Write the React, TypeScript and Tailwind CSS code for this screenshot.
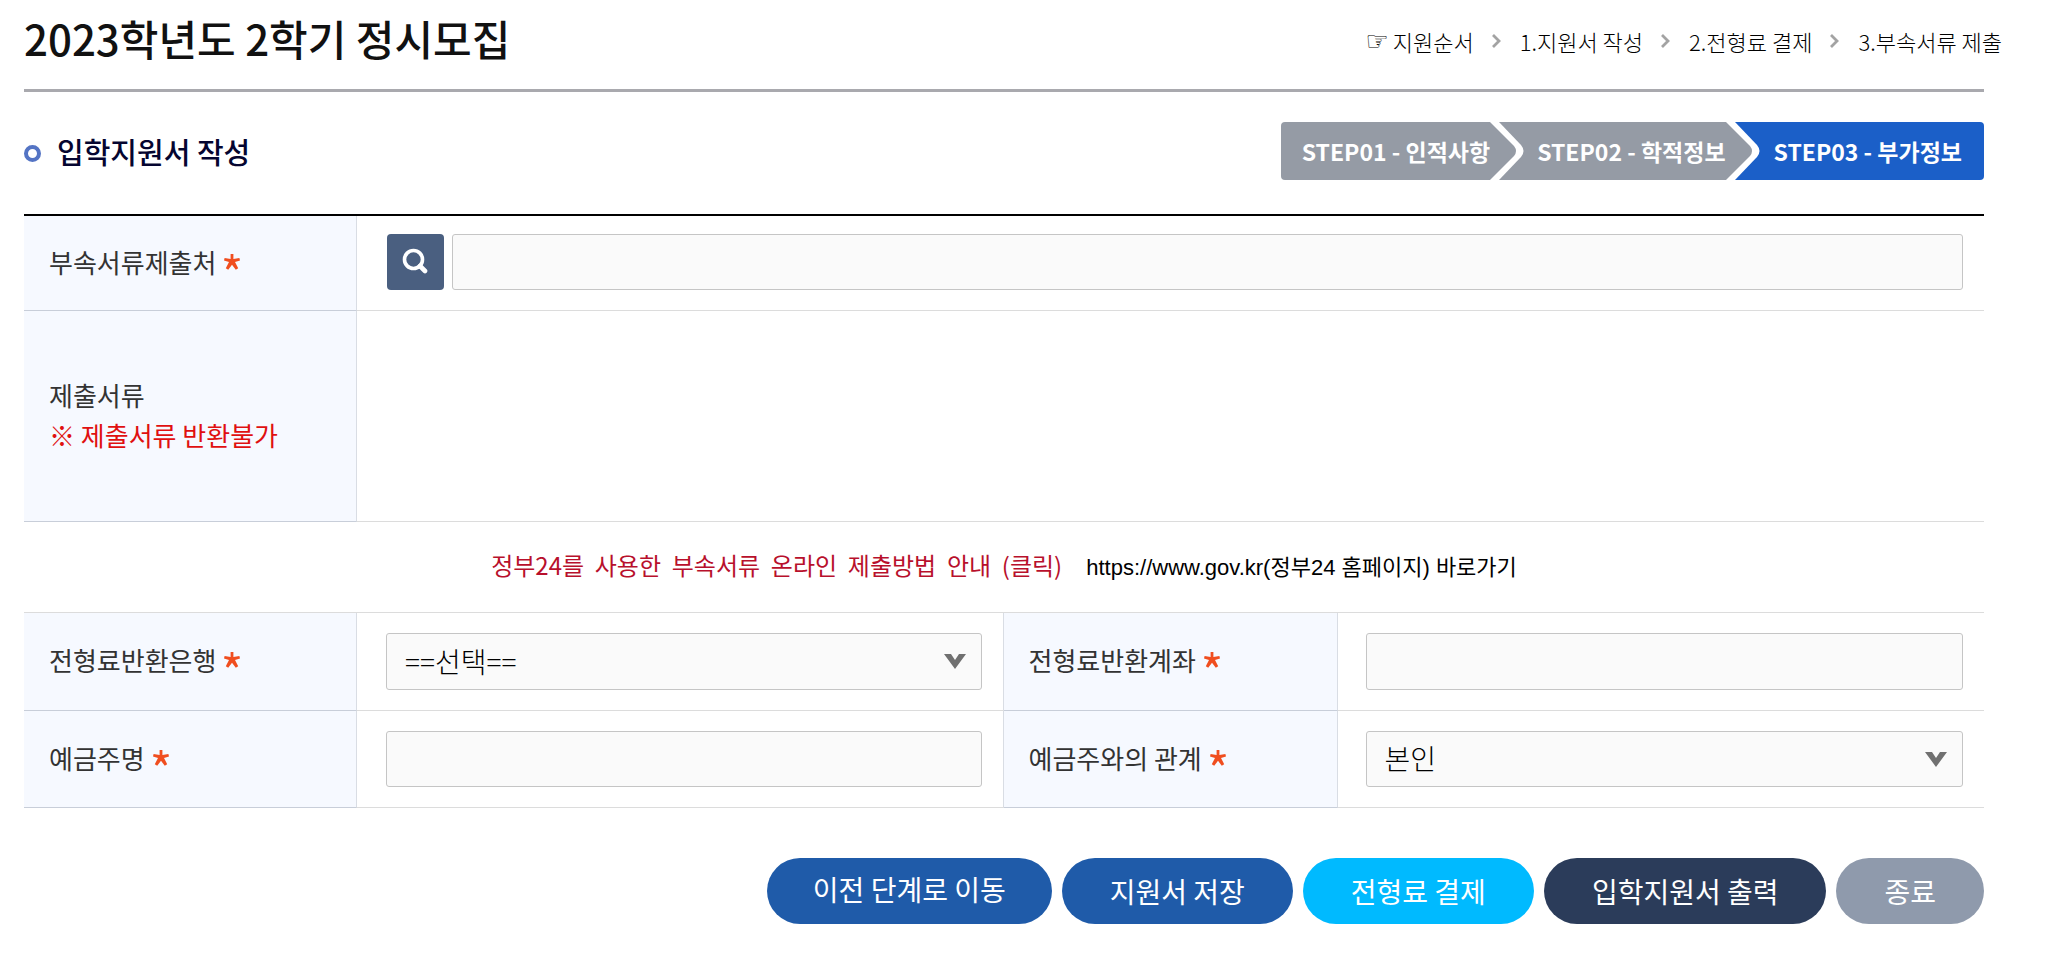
import React from 'react';

const PROCESS = ['지원순서', '1.지원서 작성', '2.전형료 결제', '3.부속서류 제출'];

const FIELD =
  'block w-full rounded-[3px] border border-[#c5c5c5] bg-[#fafafa] pl-[18px] text-[28px] font-light text-black outline-none';

const Required: React.FC = () => (
  <svg className="ml-2 inline-block h-4 w-4 align-[3px]" viewBox="0 0 16 16" aria-hidden="true">
    <path
      d="M6.6 0h2.8v5L15.4 4l.6 2.4-5 1.6 3.2 6.2-2.4 1.6L8 10.8l-3.8 5-2.4-1.6L5 8 0 6.4.6 4l6 1z"
      fill="#f04e1f"
    />
  </svg>
);

const Separator: React.FC = () => (
  <svg className="h-[14px] w-[11px]" viewBox="0 0 11 14" fill="none" aria-hidden="true">
    <path d="M2 1l6 6-6 6" stroke="#a3a3a3" strokeWidth="2.8" />
  </svg>
);

// Joint between two steps, the second colour belongs to the step on the right
const StepArrow: React.FC<{ next: string }> = ({ next }) => (
  <svg className="h-[58px] w-[34px] shrink-0" viewBox="0 0 34 58" aria-hidden="true">
    <rect width="34" height="58" fill={next} />
    <path d="M0 0h9l22 23q5 6 0 12L9 58H0z" fill="#fff" />
    <path d="M0 0l24 24q4 5 0 10L0 58z" fill="#959ba5" />
  </svg>
);

const LabelCell: React.FC<{ htmlFor: string; children: React.ReactNode }> = ({ htmlFor, children }) => (
  <th
    scope="row"
    className="border-r border-b border-r-[#d9dde4] border-b-[#c8ced9] bg-[#f6f9ff] pb-[3px] pl-[25px] text-left text-[26px] leading-10 font-normal text-[#333]"
  >
    <label htmlFor={htmlFor}>{children}</label>
  </th>
);

const SelectField: React.FC<{ id: string; height: string; options: string[] }> = ({ id, height, options }) => (
  <div className="relative">
    <select id={id} className={`${FIELD} ${height} appearance-none pb-[2px]`}>
      {options.map((option) => (
        <option key={option}>{option}</option>
      ))}
    </select>
    <svg
      className="pointer-events-none absolute top-[21px] right-4 h-[15px] w-[22px]"
      viewBox="0 0 22 15"
      aria-hidden="true"
    >
      <path d="M0 0h7l4 6 4-6h7L11 15z" fill="#707070" />
    </svg>
  </div>
);

export default function App() {
  return (
    <div className="bg-white pr-[82px] pl-6 font-['Noto_Sans_CJK_KR',sans-serif] text-[#333]">
      <header className="flex h-[92px] items-start justify-between border-b-[3px] border-[#a9a9ae]">
        <h1 className="pt-2 text-[42px] leading-[60px] font-medium text-[#111]">2023학년도 2학기 정시모집</h1>
        <ol className="-mr-[18px] flex items-center pt-[25px] text-[22px] leading-8 font-light text-black">
          {PROCESS.map((item, index) => (
            <li key={item} className="flex items-center">
              {index > 0 && (
                <span className="mr-[18px] ml-[17px]">
                  <Separator />
                </span>
              )}
              {index === 0 && (
                <span className="mr-1 font-['DejaVu_Sans',sans-serif] text-[26px] font-normal">☞</span>
              )}
              {item}
            </li>
          ))}
        </ol>
      </header>

      <div className="flex h-[122px] items-center justify-between pb-1">
        <h2 className="flex items-center gap-4 text-[29px] leading-10 font-medium text-[#050530]">
          <span className="mt-1 h-[17px] w-[17px] rounded-full border-4 border-[#5474c4]" />
          입학지원서 작성
        </h2>
        <ol className="flex text-[23px] leading-[58px] font-bold text-white">
          <li className="flex">
            <span className="rounded-l bg-[#959ba5] pl-[21px]">STEP01 - 인적사항</span>
            <StepArrow next="#959ba5" />
          </li>
          <li className="flex">
            <span className="bg-[#959ba5] pl-[13px]">STEP02 - 학적정보</span>
            <StepArrow next="#1b5fc8" />
          </li>
          <li className="rounded-r bg-[#1b5fc8] pr-[22px] pl-[14px]">STEP03 - 부가정보</li>
        </ol>
      </div>

      <form onSubmit={(event) => event.preventDefault()}>
        <table className="w-full table-fixed border-separate border-spacing-0 border-t-2 border-black">
          <colgroup>
            <col className="w-[333px]" />
            <col />
            <col className="w-[334px]" />
            <col />
          </colgroup>
          <tbody>
            <tr className="h-[95px]">
              <LabelCell htmlFor="office">
                부속서류제출처
                <Required />
              </LabelCell>
              <td colSpan={3} className="border-b border-[#dcdcdc] pr-[21px] pb-[2px] pl-[30px]">
                <div className="flex gap-2">
                  <button
                    type="button"
                    aria-label="제출처 검색"
                    className="flex h-14 w-[57px] shrink-0 items-center justify-center rounded bg-[#4a5f80] pr-[2px] pb-[2px]"
                  >
                    <svg className="h-[26px] w-[26px]" viewBox="0 0 26 26" fill="none" stroke="#fff" aria-hidden="true">
                      <circle cx="11.5" cy="11.5" r="9" strokeWidth="3.6" />
                      <path d="M18 18l5 5" strokeWidth="4.6" strokeLinecap="round" />
                    </svg>
                  </button>
                  <input id="office" type="text" className={`${FIELD} h-14`} />
                </div>
              </td>
            </tr>
            <tr className="h-[211px]">
              <th
                scope="row"
                className="border-r border-b border-r-[#d9dde4] border-b-[#c8ced9] bg-[#f6f9ff] pb-[3px] pl-[25px] text-left text-[26px] leading-10 font-normal"
              >
                제출서류
                <p className="text-[#e01010]">※ 제출서류 반환불가</p>
              </th>
              <td colSpan={3} className="border-b border-[#dcdcdc]" />
            </tr>
            <tr className="h-[91px]">
              <td colSpan={4} className="border-b border-[#dcdcdc] pb-[2px]">
                <div className="flex items-baseline justify-center gap-6 leading-8">
                  <a href="#guide" className="text-2xl leading-8 whitespace-pre text-[#b8102c]">
                    {'정부24를  사용한  부속서류  온라인  제출방법  안내  (클릭)'}
                  </a>
                  <a
                    href="#gov24"
                    className="font-['Liberation_Sans','Noto_Sans_CJK_KR',sans-serif] text-[22px] text-black"
                  >
                    https://www.gov.kr(정부24 홈페이지) 바로가기
                  </a>
                </div>
              </td>
            </tr>
            <tr className="h-[98px]">
              <LabelCell htmlFor="bank">
                전형료반환은행
                <Required />
              </LabelCell>
              <td className="border-r border-b border-r-[#d9dde4] border-b-[#dcdcdc] pr-[21px] pl-[29px]">
                <SelectField id="bank" height="h-[57px]" options={['==선택==']} />
              </td>
              <LabelCell htmlFor="account">
                전형료반환계좌
                <Required />
              </LabelCell>
              <td className="border-b border-[#dcdcdc] pr-[21px] pl-7">
                <input id="account" type="text" className={`${FIELD} h-[57px]`} />
              </td>
            </tr>
            <tr className="h-[97px]">
              <LabelCell htmlFor="holder">
                예금주명
                <Required />
              </LabelCell>
              <td className="border-r border-b border-r-[#d9dde4] border-b-[#dcdcdc] pr-[21px] pl-[29px]">
                <input id="holder" type="text" className={`${FIELD} h-14`} />
              </td>
              <LabelCell htmlFor="relation">
                예금주와의 관계
                <Required />
              </LabelCell>
              <td className="border-b border-[#dcdcdc] pr-[21px] pl-7">
                <SelectField id="relation" height="h-14" options={['본인']} />
              </td>
            </tr>
          </tbody>
        </table>

        <div className="flex justify-end gap-[10px] pt-[50px] pb-11 text-[28px] leading-[66px] text-white">
          <button type="button" className="h-[66px] rounded-full bg-[#1f5ba9] px-[46px] pb-1 leading-[62px]">
            이전 단계로 이동
          </button>
          <button type="button" className="h-[66px] rounded-full bg-[#1f5ba9] px-12">
            지원서 저장
          </button>
          <button type="button" className="h-[66px] rounded-full bg-[#00baff] px-12">
            전형료 결제
          </button>
          <button type="button" className="h-[66px] rounded-full bg-[#2b3c5a] px-12">
            입학지원서 출력
          </button>
          <button type="button" className="h-[66px] rounded-full bg-[#8f9aac] px-12">
            종료
          </button>
        </div>
      </form>
    </div>
  );
}
